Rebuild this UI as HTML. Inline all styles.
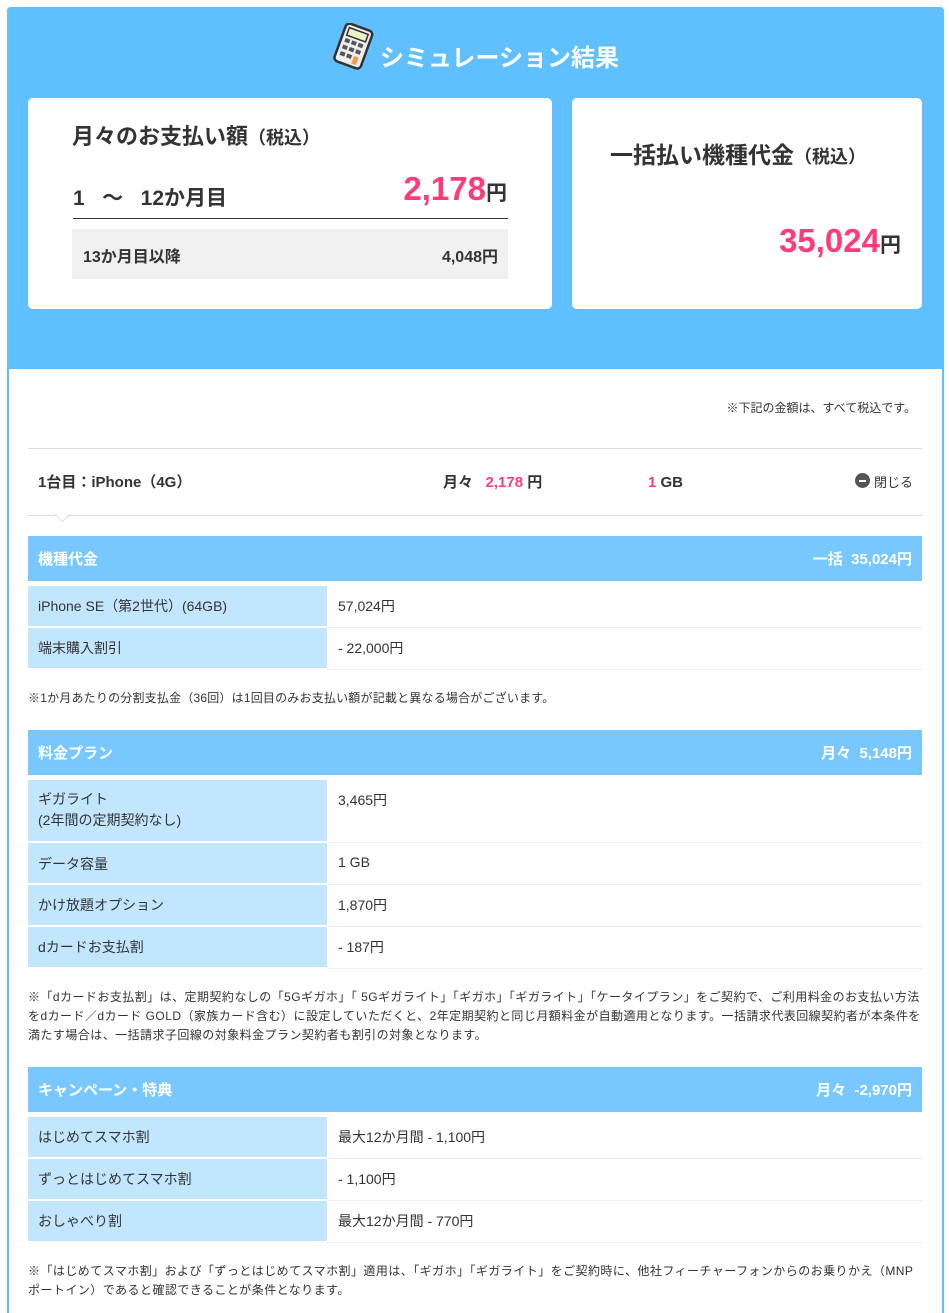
<!DOCTYPE html>
<html style="height:1313px;overflow:hidden"><head><meta charset="utf-8">
<style>
*{margin:0;padding:0;box-sizing:border-box}
body{width:949px;height:1313px;background:#fff;font-family:"Liberation Sans","Noto Sans CJK JP",sans-serif;color:#333;position:relative;overflow:hidden}
.a{position:absolute;white-space:nowrap}
.frame{position:absolute;left:7px;top:7px;width:937px;height:1330px;border:2px solid #5fbfff;border-radius:4px 4px 0 0}
.top{position:absolute;left:7px;top:7px;width:937px;height:362px;background:#5fbfff;border-radius:4px 4px 0 0}
.card{position:absolute;background:#fff;border-radius:5px}
.pink{color:#ff3c78}
.hd{position:absolute;left:28px;width:894px;height:45px;background:#78c8ff;color:#fff;font-weight:bold;font-size:15px}
.hd span{position:absolute;top:12px}
.row{position:absolute;left:28px;width:894px;border-bottom:1px solid #eee;font-size:14px}
.row .l{position:absolute;left:0;top:0;bottom:-1px;width:299px;background:#c3e6ff;padding:10px 10px;border-bottom:2px solid #fff}
.row .r{position:absolute;left:310px;top:10px}
.note{position:absolute;left:28px;width:894px;font-size:12px;line-height:19px;letter-spacing:0.45px}
</style></head><body>
<div class="frame"></div>
<div class="top"></div>
<svg class="a" style="left:330px;top:23px" width="46" height="48" viewBox="0 0 46 48">
<g transform="rotate(20 23 24)"><rect x="9" y="3" width="28" height="40" rx="4" fill="#eee" stroke="#333" stroke-width="2.5"/>
<rect x="13" y="7" width="20" height="8" fill="#e8f5c8" stroke="#333" stroke-width="1.5"/>
<g fill="#555"><rect x="13" y="18" width="5" height="4"/><rect x="20" y="18" width="5" height="4"/><rect x="27" y="18" width="5" height="4"/><rect x="13" y="25" width="5" height="4"/><rect x="20" y="25" width="5" height="4"/><rect x="27" y="25" width="5" height="4"/><rect x="13" y="32" width="5" height="4"/><rect x="20" y="32" width="5" height="4"/></g><rect x="27" y="32" width="5" height="8" fill="#f0a040"/></g></svg>
<div class="a" style="left:380px;top:38px;font-size:24px;font-weight:bold;color:#fff">シミュレーション結果</div>
<div class="card" style="left:28px;top:98px;width:524px;height:211px"></div>
<div class="card" style="left:572px;top:98px;width:350px;height:211px"></div>
<div class="a" style="left:72px;top:119px;font-size:22px;font-weight:bold">月々のお支払い額<span style="font-size:18px">（税込）</span></div>
<div class="a" style="left:73px;top:182px;font-size:21px;font-weight:bold">1 &nbsp; 〜 &nbsp; 12か月目</div>
<div class="a" style="right:442px;top:170px;font-size:33px;font-weight:bold"><span class="pink">2,178</span><span style="font-size:21px">円</span></div>
<div class="a" style="left:73px;top:218px;width:435px;height:1px;background:#333"></div>
<div class="a" style="left:72px;top:229px;width:436px;height:50px;background:#f0f0f0"></div>
<div class="a" style="left:83px;top:243px;font-size:16px;font-weight:bold">13か月目以降</div>
<div class="a" style="right:451px;top:243px;font-size:16px;font-weight:bold">4,048円</div>
<div class="a" style="left:610px;top:136px;font-size:23px;font-weight:bold">一括払い機種代金<span style="font-size:18px">（税込）</span></div>
<div class="a" style="right:48px;top:222px;font-size:33px;font-weight:bold"><span class="pink">35,024</span><span style="font-size:21px">円</span></div>

<div class="a" style="right:33px;top:399px;font-size:12px">※下記の金額は、すべて税込です。</div>
<div class="a" style="left:28px;top:448px;width:894px;height:1px;background:#ddd"></div>
<div class="a" style="left:38px;top:471px;font-size:15px;font-weight:bold">1台目：iPhone（4G）</div>
<div class="a" style="left:443px;top:471px;font-size:15px;font-weight:bold">月々 &nbsp; <span class="pink">2,178</span> 円</div>
<div class="a" style="left:648px;top:471px;font-size:15px;font-weight:bold">月<span style="display:none"></span></div>
<div class="a" style="left:648px;top:471px;width:60px;height:22px;background:#fff"></div>
<div class="a" style="left:648px;top:471px;font-size:15px;font-weight:bold"><span class="pink">1</span> GB<span style="font-size:15px;visibility:hidden">月</span></div>
<div class="a" style="left:855px;top:473px;width:15px;height:15px;border-radius:50%;background:#555"></div>
<div class="a" style="left:859px;top:480px;width:7px;height:2px;background:#fff"></div>
<div class="a" style="left:874px;top:472px;font-size:13px">閉じる</div>
<div class="a" style="left:28px;top:515px;width:894px;height:1px;background:#ddd"></div>
<div class="a" style="left:57px;top:509px;width:11px;height:11px;background:#fff;border-right:1px solid #ddd;border-bottom:1px solid #ddd;transform:rotate(45deg)"></div>

<div class="hd" style="top:536px"><span style="left:10px">機種代金</span><span style="right:10px">一括 &nbsp;35,024円</span></div>
<div class="row" style="top:586px;height:42px"><div class="l">iPhone SE（第2世代）(64GB)</div><div class="r">57,024円</div></div>
<div class="row" style="top:628px;height:42px"><div class="l">端末購入割引</div><div class="r">- 22,000円</div></div>
<div class="note" style="top:689px;letter-spacing:0.2px">※1か月あたりの分割支払金（36回）は1回目のみお支払い額が記載と異なる場合がございます。</div>

<div class="hd" style="top:730px"><span style="left:10px">料金プラン</span><span style="right:10px">月々 &nbsp;5,148円</span></div>
<div class="row" style="top:780px;height:63px"><div class="l" style="padding-top:9px;line-height:21px">ギガライト<br>(2年間の定期契約なし)</div><div class="r">3,465円</div></div>
<div class="row" style="top:843px;height:42px"><div class="l" style="padding-top:11px">データ容量</div><div class="r" style="top:11px">1 GB</div></div>
<div class="row" style="top:885px;height:42px"><div class="l">かけ放題オプション</div><div class="r">1,870円</div></div>
<div class="row" style="top:927px;height:42px"><div class="l">dカードお支払割</div><div class="r">- 187円</div></div>
<div class="note" style="top:988px">※「dカードお支払割」は、定期契約なしの「5Gギガホ」「 5Gギガライト」「ギガホ」「ギガライト」「ケータイプラン」をご契約で、ご利用料金のお支払い方法をdカード／dカード GOLD（家族カード含む）に設定していただくと、2年定期契約と同じ月額料金が自動適用となります。一括請求代表回線契約者が本条件を満たす場合は、一括請求子回線の対象料金プラン契約者も割引の対象となります。</div>

<div class="hd" style="top:1067px"><span style="left:10px">キャンペーン・特典</span><span style="right:10px">月々 &nbsp;-2,970円</span></div>
<div class="row" style="top:1117px;height:42px"><div class="l">はじめてスマホ割</div><div class="r">最大12か月間 - 1,100円</div></div>
<div class="row" style="top:1159px;height:42px"><div class="l">ずっとはじめてスマホ割</div><div class="r">- 1,100円</div></div>
<div class="row" style="top:1201px;height:42px"><div class="l">おしゃべり割</div><div class="r">最大12か月間 - 770円</div></div>
<div class="note" style="top:1262px">※「はじめてスマホ割」および「ずっとはじめてスマホ割」適用は、「ギガホ」「ギガライト」をご契約時に、他社フィーチャーフォンからのお乗りかえ（MNPポートイン）であると確認できることが条件となります。</div>
</body></html>
